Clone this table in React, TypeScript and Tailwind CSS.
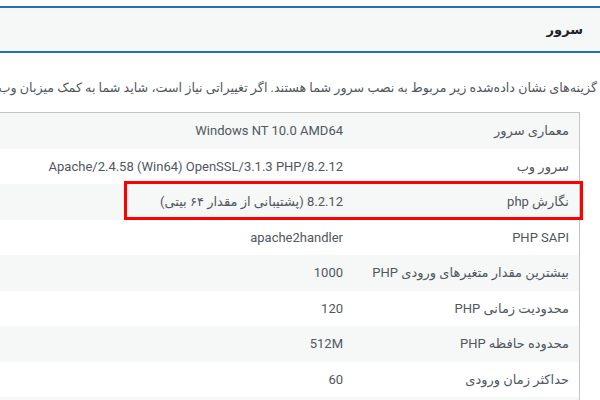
import React from "react";

const rows: [string, string][] = [
  ["معماری سرور", "Windows NT 10.0 AMD64"],
  ["سرور وب", "Apache/2.4.58 (Win64) OpenSSL/3.1.3 PHP/8.2.12"],
  ["نگارش php", "8.2.12 (پشتیبانی از مقدار ۶۴ بیتی)"],
  ["PHP SAPI", "apache2handler"],
  ["بیشترین مقدار متغیرهای ورودی PHP", "1000"],
  ["محدودیت زمانی PHP", "120"],
  ["محدوده حافظه PHP", "512M"],
  ["حداکثر زمان ورودی", "60"],
  ["", ""],
];

export default function App() {
  return (
    <div
      dir="rtl"
      className="relative w-[600px] h-[400px] overflow-hidden bg-white text-[13px] text-[#50575e]"
      style={{ fontFamily: "Roboto, 'DejaVu Sans', sans-serif" }}
    >
      <div className="h-[6px]" />
      <div className="h-[47px] border-t-2 border-b-2 border-[#2271b1] bg-[#f6f7f7] flex items-center pr-[17px]">
        <h3 className="font-bold text-[13px] text-[#1d2327]">سرور</h3>
      </div>
      <p className="mt-[25px] h-[20px] leading-[20px] pr-[3px] whitespace-nowrap text-[12.7px]">
        گزینه‌های نشان داده‌شده زیر مربوط به نصب سرور شما هستند. اگر تغییراتی نیاز است، شاید شما به کمک میزبان وب خود نیاز داشته باشید.
      </p>
      <div className="mt-[14px] mr-[20px] ml-[-10px] border-t border-r border-[#c3c4c7]">
        {rows.map(([label, value], i) => (
          <div
            key={i}
            className={`flex items-center h-[35.5px] ${i % 2 === 0 ? "bg-[#f6f7f7]" : "bg-white"}`}
          >
            <div className="w-[226px] shrink-0 pr-[10px] whitespace-nowrap">{label}</div>
            <div className="flex-1 pr-[10px] whitespace-nowrap">{value}</div>
          </div>
        ))}
      </div>
      <div className="absolute left-[124px] top-[181px] w-[459px] h-[39px] border-[3px] border-[#ff0000]" />
    </div>
  );
}
